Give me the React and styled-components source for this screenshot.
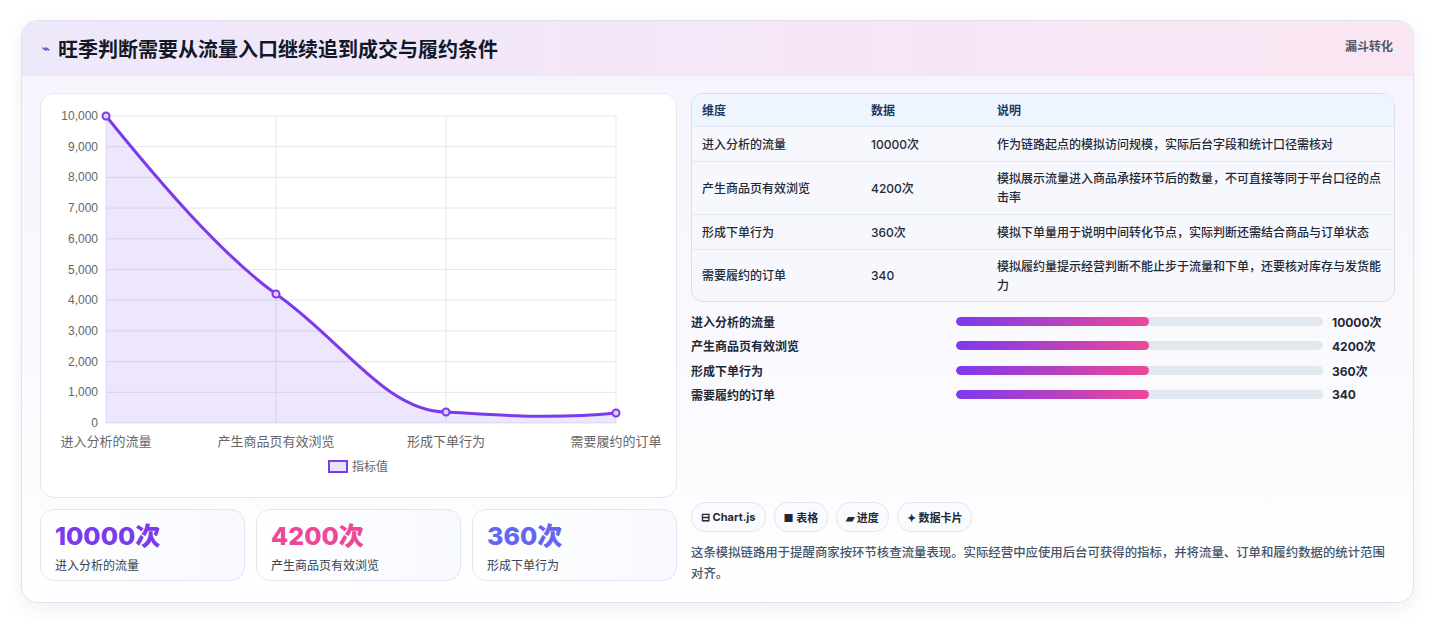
import React from "react";
import styled, { createGlobalStyle } from "styled-components";

const G = createGlobalStyle`
  body{margin:0;background:#f1f1f4;font-family:Inter,"Noto Sans CJK SC",sans-serif;}
`;
const Page = styled.div`background:#fff;padding:20px 21px 12px 21px;height:589px;box-sizing:content-box;`;
const Card = styled.div`border:1px solid #e3e1f0;border-radius:16px;overflow:hidden;background:linear-gradient(180deg,#f6f3fd 0%,#fbfbfe 70%,#fff 100%);box-shadow:0 6px 18px rgba(80,70,140,.08);`;
const Header = styled.div`height:54px;display:flex;justify-content:space-between;padding:0 20px;background:linear-gradient(90deg,#eee8fb,#fbe6f3);border-bottom:1px solid #ebe5f6;`;
const Title = styled.h1`margin:0;font-size:20px;font-weight:700;color:#111827;display:flex;align-items:center;gap:8px;`;
const Tag = styled.span`font-size:12px;font-weight:700;color:#555a68;margin-top:16px;`;
const Body = styled.div`display:grid;grid-template-columns:637px 704px;gap:14px;padding:17px 18px 18px 18px;`;
const Col = styled.div`display:flex;flex-direction:column;`;
const ChartBox = styled.div`position:relative;height:403px;border:1px solid #e6e8f0;border-radius:14px;background:#fff;`;
const Kpis = styled.div`display:grid;grid-template-columns:repeat(3,1fr);gap:11px;margin-top:11px;`;
const Kpi = styled.div`height:72px;border:1px solid #e1e7f2;border-radius:14px;background:linear-gradient(90deg,#fff,#f7f9fe);padding:12px 14px;box-sizing:border-box;`;
const KNum = styled.div`font-size:25px;font-weight:800;color:${p=>p.c};line-height:28px;`;
const KLab = styled.div`font-size:12px;color:#374151;margin-top:6px;`;
const Table = styled.div`border:1px solid #d9e0ec;border-radius:12px;overflow:hidden;background:#f7f8fd;`;
const Row = styled.div`display:grid;grid-template-columns:169px 126px 1fr;height:${p=>p.h}px;box-sizing:border-box;align-items:center;padding:0 10px;font-size:12px;color:${p=>p.head?"#1e3a5f":"#1f2937"};font-weight:${p=>p.head?700:500};background:${p=>p.head?"#eef5ff":"transparent"};border-top:${p=>p.head?"none":"1px solid #e3e7ef"};line-height:19px;`;
const Prog = styled.div`display:flex;flex-direction:column;gap:6.5px;margin-top:10px;`;
const PRow = styled.div`display:grid;grid-template-columns:265px 367px 1fr;align-items:center;height:18px;font-size:12px;font-weight:600;color:#1f2937;`;
const Track = styled.div`height:9px;border-radius:5px;background:#e2e8f0;overflow:hidden;`;
const Fill = styled.div`height:100%;border-radius:5px;background:linear-gradient(90deg,#7c3aed,#ec4899);`;
const Val = styled.span`padding-left:9px;font-weight:700;`;
const Chips = styled.div`display:flex;gap:8px;margin-top:98px;`;
const Chip = styled.span`height:28px;padding:0 9px;border:1px solid #e3e6ee;border-radius:14px;background:#fafbfe;font-size:11px;font-weight:700;color:#1f2937;display:flex;align-items:center;gap:4px;`;
const Desc = styled.p`margin:10px 0 0;font-size:12.4px;line-height:21px;color:#475569;font-weight:500;`;

const rows=[["进入分析的流量","10000次","作为链路起点的模拟访问规模，实际后台字段和统计口径需核对",35],["产生商品页有效浏览","4200次","模拟展示流量进入商品承接环节后的数量，不可直接等同于平台口径的点击率",53],["形成下单行为","360次","模拟下单量用于说明中间转化节点，实际判断还需结合商品与订单状态",35],["需要履约的订单","340","模拟履约量提示经营判断不能止步于流量和下单，还要核对库存与发货能力",52]];

function Chart(){
  const x0=65,x1=575,y0=22,y1=329;
  const ys=[];for(let i=0;i<=10;i++)ys.push(y1-(y1-y0)*i/10);
  const xs=[65,235,405,575];
  const t={fontFamily:"Liberation Sans,Arial,sans-serif",fontSize:12,fill:"#666"};
  const curve="M65,22 C120,90 180,160 235,200 C300,245 345,318 405,318 C445,320 505,326 575,319";
  return (<svg width="637" height="403" style={{position:"absolute",left:0,top:0}}>
    {ys.map((y,i)=><g key={i}><line x1={x0} x2={x1} y1={y} y2={y} stroke="#e5e7eb"/><text x={x0-8} y={y+4} textAnchor="end" {...t}>{(i*1000).toLocaleString("en-US")}</text></g>)}
    {xs.map((x,i)=><line key={i} x1={x} x2={x} y1={y0} y2={y1} stroke="#e5e7eb"/>)}
    <path d={curve+` L575,${y1} L65,${y1} Z`} fill="rgba(124,58,237,0.13)"/>
    <path d={curve} fill="none" stroke="#7c3aed" strokeWidth="3"/>
    {[[65,22],[235,200],[405,318],[575,319]].map(([x,y],i)=><circle key={i} cx={x} cy={y} r="3.5" fill="#ddd0fb" stroke="#7c3aed" strokeWidth="2"/>)}
    {["进入分析的流量","产生商品页有效浏览","形成下单行为","需要履约的订单"].map((l,i)=><text key={i} x={xs[i]} y={352} textAnchor="middle" {...t} fontFamily="Noto Sans CJK SC,sans-serif" fontSize="13">{l}</text>)}
    <rect x="288" y="367" width="18" height="11" fill="rgba(124,58,237,.15)" stroke="#7c3aed" strokeWidth="2"/>
    <text x="311" y="377" {...t} fontFamily="Noto Sans CJK SC,sans-serif">指标值</text>
  </svg>);
}

export default function App(){
  return (<Page><G/><Card>
    <Header><Title><span style={{fontSize:13,color:"#5b5bd6"}}>⌁</span>旺季判断需要从流量入口继续追到成交与履约条件</Title><Tag>漏斗转化</Tag></Header>
    <Body>
      <Col>
        <ChartBox><Chart/></ChartBox>
        <Kpis>
          <Kpi><KNum c="#7c3aed">10000次</KNum><KLab>进入分析的流量</KLab></Kpi>
          <Kpi><KNum c="#ec4899">4200次</KNum><KLab>产生商品页有效浏览</KLab></Kpi>
          <Kpi><KNum c="#6366f1">360次</KNum><KLab>形成下单行为</KLab></Kpi>
        </Kpis>
      </Col>
      <Col>
        <Table>
          <Row head h={32}><span>维度</span><span>数据</span><span>说明</span></Row>
          {rows.map(r=><Row key={r[0]} h={r[3]}><span>{r[0]}</span><span>{r[1]}</span><span>{r[2]}</span></Row>)}
        </Table>
        <Prog>
          {rows.map(r=><PRow key={r[0]}><span>{r[0]}</span><Track><Fill style={{width:"52.5%"}}/></Track><Val>{r[1]}</Val></PRow>)}
        </Prog>
        <Chips><Chip>⊟ Chart.js</Chip><Chip>■ 表格</Chip><Chip>▰ 进度</Chip><Chip>✦ 数据卡片</Chip></Chips>
        <Desc>这条模拟链路用于提醒商家按环节核查流量表现。实际经营中应使用后台可获得的指标，并将流量、订单和履约数据的统计范围对齐。</Desc>
      </Col>
    </Body>
  </Card></Page>);
}
